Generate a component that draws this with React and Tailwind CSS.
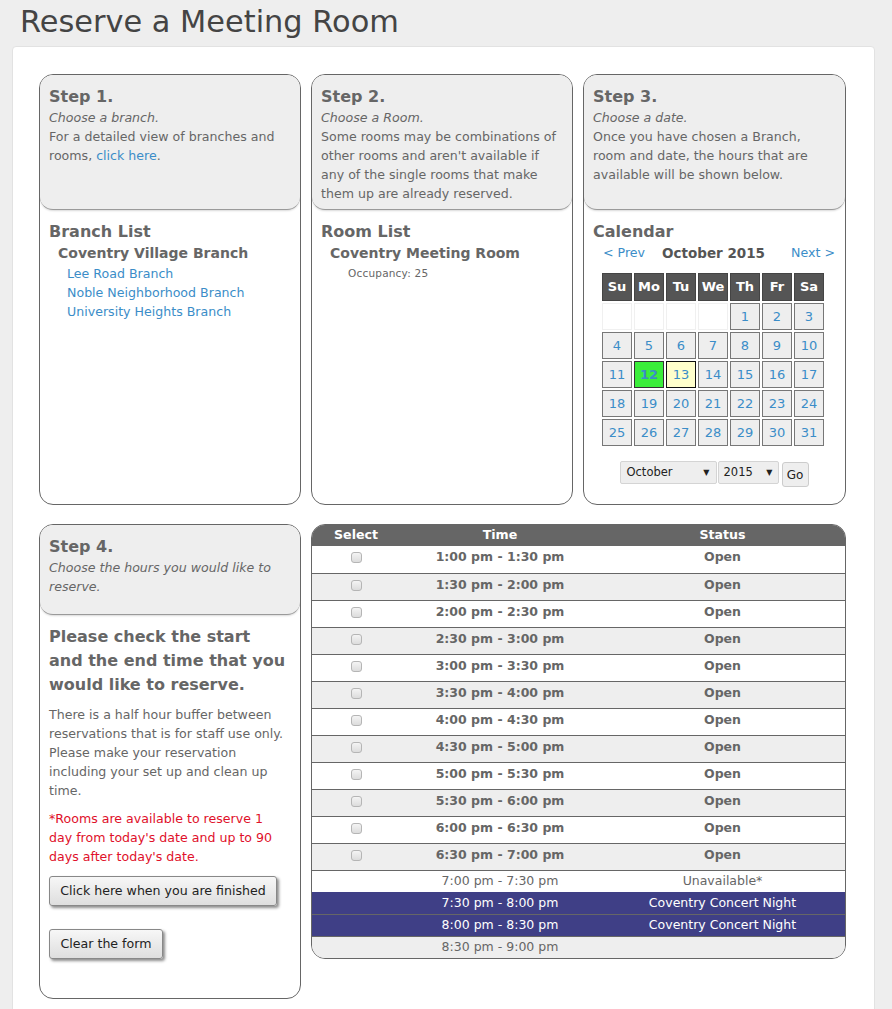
import React from "react";

const FONT = { fontFamily: '"DejaVu Sans", Verdana, sans-serif' };

function StepHeader({ step, italic, children, h }) {
  return (
    <div className={`bg-[#eeeeee] ${h} px-[9px] pt-[11px] rounded-b-[13px] border-b border-[#9a9a9a] shadow-[0_1px_2px_rgba(0,0,0,0.15)]`}>
      <div className="text-[16px] leading-[22px] font-bold text-[#666]">{step}</div>
      <div className="text-[12.6px] leading-[19px] italic text-[#666]">{italic}</div>
      {children && <div className="text-[12.6px] leading-[19px] text-[#666]">{children}</div>}
    </div>
  );
}

const days = [];
for (let i = 0; i < 4; i++) days.push(null);
for (let d = 1; d <= 31; d++) days.push(d);

function Calendar() {
  return (
    <div className="px-[9px] pt-[11px]">
      <div className="text-[16px] leading-[22px] font-bold text-[#666]">Calendar</div>
      <div className="flex items-center h-[20px] text-[12.6px]">
        <span className="ml-[10px] text-[#3b8dc8]">&lt; Prev</span>
        <span className="ml-[17px] text-[13.5px] font-bold text-[#555]">October 2015</span>
        <span className="ml-auto mr-[1px] text-[#3b8dc8]">Next &gt;</span>
      </div>
      <div className="ml-[9px] mt-[10px] grid grid-cols-[repeat(7,30px)] gap-[2px]">
        {["Su", "Mo", "Tu", "We", "Th", "Fr", "Sa"].map((d) => (
          <div key={d} className="h-[28px] bg-[#555] border border-[#444] flex items-center justify-center text-white font-bold text-[13px]">
            {d}
          </div>
        ))}
        {days.map((d, i) => {
          if (d === null)
            return <div key={i} className="h-[27px] bg-white border border-[#f0f0f0]" />;
          let cls = "bg-[#eeeeee] border-[#777]";
          let fw = "";
          if (d === 12) {
            cls = "bg-[#3bee3b] border-[#333]";
            fw = "font-bold";
          }
          if (d === 13) cls = "bg-[#ffffcc] border-[#111]";
          return (
            <div key={i} className={`h-[27px] border ${cls} ${fw} flex items-center justify-center text-[13px] text-[#3b8dc8]`}>
              {d}
            </div>
          );
        })}
      </div>
      <div className="mt-[15px] flex items-start justify-center gap-[1px] pr-[1px]">
        <div className="w-[97px] h-[23px] bg-[#eeeeee] border border-[#d4d4d4] rounded-[2px] flex items-center justify-between px-[6px] text-[11.5px] text-[#222]">
          <span>October</span>
          <span className="text-[8px]">▼</span>
        </div>
        <div className="w-[61px] h-[23px] bg-[#eeeeee] border border-[#d4d4d4] rounded-[2px] flex items-center justify-between px-[5px] text-[11.5px] text-[#222]">
          <span>2015</span>
          <span className="text-[8px]">▼</span>
        </div>
        <div className="ml-[2px] mt-[1px] w-[27px] h-[25px] bg-[#eeeeee] border border-[#ccc] rounded-[3px] flex items-center justify-center text-[12px] text-[#222]">
          Go
        </div>
      </div>
    </div>
  );
}

const openTimes = [
  "1:00 pm - 1:30 pm",
  "1:30 pm - 2:00 pm",
  "2:00 pm - 2:30 pm",
  "2:30 pm - 3:00 pm",
  "3:00 pm - 3:30 pm",
  "3:30 pm - 4:00 pm",
  "4:00 pm - 4:30 pm",
  "4:30 pm - 5:00 pm",
  "5:00 pm - 5:30 pm",
  "5:30 pm - 6:00 pm",
  "6:00 pm - 6:30 pm",
  "6:30 pm - 7:00 pm",
];

function Checkbox() {
  return <span className="block w-[11px] h-[11px] rounded-[3px] border border-[#b5b5b5] bg-gradient-to-b from-[#f4f4f4] to-[#dcdcdc]" />;
}

function TimeTable() {
  return (
    <div className="h-[435px] rounded-[14px] border border-[#666] overflow-hidden bg-[#eeeeee]">
      <div className="grid grid-cols-[88px_200px_1fr] h-[21px] bg-[#666] text-white font-bold text-[12.6px] items-center">
        <div className="text-center">Select</div>
        <div className="text-center">Time</div>
        <div className="text-center">Status</div>
      </div>
      {openTimes.map((t, i) => (
        <div
          key={t}
          className={`grid grid-cols-[88px_200px_1fr] h-[27px] items-center text-[12.5px] font-bold text-[#666] ${i > 0 ? "border-t border-[#666]" : ""} ${i % 2 === 0 ? "bg-white" : "bg-[#eeeeee]"}`}
        >
          <div className="flex justify-center pb-[4px]"><Checkbox /></div>
          <div className="text-center pb-[4px]">{t}</div>
          <div className="text-center pb-[4px]">Open</div>
        </div>
      ))}
      <div className="grid grid-cols-[88px_200px_1fr] h-[22px] items-center text-[12.5px] text-[#666] border-t border-[#666] bg-white">
        <div />
        <div className="text-center">7:00 pm - 7:30 pm</div>
        <div className="text-center">Unavailable*</div>
      </div>
      {["7:30 pm - 8:00 pm", "8:00 pm - 8:30 pm"].map((t, i) => (
        <div
          key={t}
          className={`grid grid-cols-[88px_200px_1fr] h-[22px] items-center text-[12.5px] text-white bg-[#3f3f86] ${i > 0 ? "border-t border-[#666]" : ""}`}
        >
          <div />
          <div className="text-center">{t}</div>
          <div className="text-center">Coventry Concert Night</div>
        </div>
      ))}
      <div className="grid grid-cols-[88px_200px_1fr] h-[22px] items-center text-[12.5px] text-[#666] border-t border-[#666] bg-[#eeeeee]">
        <div />
        <div className="text-center">8:30 pm - 9:00 pm</div>
        <div />
      </div>
    </div>
  );
}

function Button({ children, w }) {
  return (
    <div
      className={`${w} h-[30px] flex items-center justify-center rounded-[3px] border border-[#888] bg-gradient-to-b from-[#f7f7f7] to-[#dedede] shadow-[2px_2px_3px_rgba(0,0,0,0.45)] text-[12.6px] text-[#222]`}
    >
      {children}
    </div>
  );
}

export default function App() {
  return (
    <div className="min-h-[1009px] bg-[#eeeeee]" style={FONT}>
      <div className="h-[46px] pl-[20px] flex items-center">
        <h1 className="text-[30.4px] leading-[36px] text-[#444] font-normal pb-[3px]">Reserve a Meeting Room</h1>
      </div>
      <div className="ml-[12px] w-[863px] bg-white border border-[#e2e2e2] rounded-[4px] pl-[26px] pt-[27px] pb-[30px]">
        <div className="grid grid-cols-[262px_262px_263px] gap-[10px] h-[431px]">
          <div className="rounded-[14px] border border-[#666] bg-white overflow-hidden">
            <StepHeader step="Step 1." italic="Choose a branch." h="h-[135px]">
              For a detailed view of branches and<br />rooms, <span className="text-[#3b8dc8]">click here</span>.
            </StepHeader>
            <div className="px-[9px] pt-[11px] text-[#666]">
              <div className="text-[16px] leading-[22px] font-bold">Branch List</div>
              <div className="pl-[9px] text-[14px] leading-[21px] font-bold">Coventry Village Branch</div>
              <div className="pl-[18px] text-[12.6px] leading-[19px] text-[#3b8dc8]">
                <div>Lee Road Branch</div>
                <div>Noble Neighborhood Branch</div>
                <div>University Heights Branch</div>
              </div>
            </div>
          </div>
          <div className="rounded-[14px] border border-[#666] bg-white overflow-hidden">
            <StepHeader step="Step 2." italic="Choose a Room." h="h-[135px]">
              <span className="whitespace-nowrap">Some rooms may be combinations of</span><br />other rooms and aren't available if<br />any of the single rooms that make<br />them up are already reserved.
            </StepHeader>
            <div className="px-[9px] pt-[11px] text-[#666]">
              <div className="text-[16px] leading-[22px] font-bold">Room List</div>
              <div className="pl-[9px] text-[14px] leading-[21px] font-bold">Coventry Meeting Room</div>
              <div className="pl-[27px] text-[10.5px] leading-[18px] tracking-[0.2px]">Occupancy: 25</div>
            </div>
          </div>
          <div className="rounded-[14px] border border-[#666] bg-white overflow-hidden">
            <StepHeader step="Step 3." italic="Choose a date." h="h-[135px]">
              Once you have chosen a Branch,<br />room and date, the hours that are<br />available will be shown below.
            </StepHeader>
            <Calendar />
          </div>
        </div>
        <div className="mt-[19px] grid grid-cols-[262px_535px] gap-[10px]">
          <div className="h-[475px] rounded-[14px] border border-[#666] bg-white overflow-hidden">
            <StepHeader step="Step 4." italic={<>Choose the hours you would like to<br />reserve.</>} h="h-[90px]" />
            <div className="px-[9px] pt-[10px] text-[#666]">
              <div className="text-[16px] leading-[24px] font-bold">
                Please check the start<br />and the end time that you<br />would like to reserve.
              </div>
              <div className="mt-[8px] text-[12.6px] leading-[19px]">
                There is a half hour buffer between<br />reservations that is for staff use only.<br />Please make your reservation<br />including your set up and clean up<br />time.
              </div>
              <div className="mt-[9px] text-[12.6px] leading-[19px] text-[#e0102a]">
                *Rooms are available to reserve 1<br />day from today's date and up to 90<br />days after today's date.
              </div>
              <div className="mt-[10px]">
                <Button w="w-[228px]">Click here when you are finished</Button>
              </div>
              <div className="mt-[23px]">
                <Button w="w-[114px]">Clear the form</Button>
              </div>
            </div>
          </div>
          <TimeTable />
        </div>
      </div>
    </div>
  );
}
